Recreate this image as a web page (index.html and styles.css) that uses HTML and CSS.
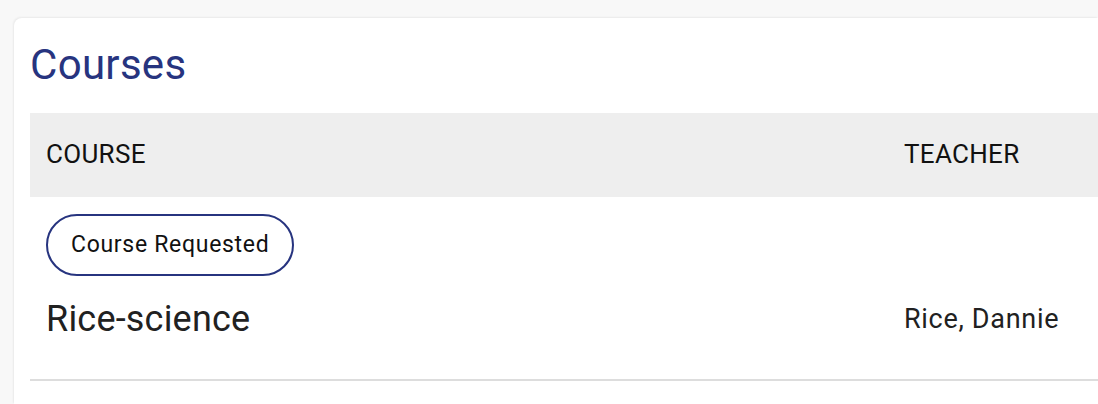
FILE: index.html
```html
<!DOCTYPE html>
<html lang="en">
<head>
    <meta charset="UTF-8">
    <meta name="viewport" content="width=device-width, initial-scale=1.0">
    <title>Courses</title>
    <link rel="stylesheet" href="styles.css">
</head>
<body>
    <div class="card">
        <h1 class="card-title">Courses</h1>
        <table class="courses">
            <thead>
                <tr>
                    <th class="col-course">Course</th>
                    <th class="col-teacher">Teacher</th>
                </tr>
            </thead>
            <tbody>
                <tr>
                    <td class="col-course">
                        <div class="chip-row">
                            <span class="chip">Course Requested</span>
                        </div>
                        <div class="course-name">Rice-science</div>
                    </td>
                    <td class="col-teacher teacher-name">Rice, Dannie</td>
                </tr>
            </tbody>
        </table>
    </div>
</body>
</html>
```

FILE: styles.css
```css
html, body {
    height: 100%;
}
body {
    font-family: Roboto, "Noto Sans", Arial, sans-serif;
    background-color: #f8f8f8;
    margin: 0;
    padding: 18px 0 0 14px;
    box-sizing: border-box;
    overflow: hidden;
}
.card {
    background-color: #ffffff;
    border-radius: 8px 0 0 0;
    box-shadow: -1px -1px 2px rgba(0, 0, 0, 0.06);
    padding: 23px 0 0 16px;
    height: 100%;
    box-sizing: border-box;
}
.card-title {
    margin: 0 0 24px 0;
    font-size: 42px;
    font-weight: 400;
    letter-spacing: 0.3px;
    line-height: 48px;
    color: #27347f;
}
.courses {
    width: 100%;
    border-collapse: collapse;
}
.courses th {
    background-color: #eeeeee;
    height: 84px;
    padding: 0 16px 3px 16px;
    box-sizing: border-box;
    text-align: left;
    font-weight: 400;
    font-size: 26px;
    letter-spacing: 0.3px;
    text-transform: uppercase;
    color: #111111;
}
.courses td {
    padding: 17px 16px 39px 16px;
    border-bottom: 2px solid #dddddd;
    vertical-align: bottom;
    color: #212121;
}
.col-course {
    width: 826px;
}
.chip-row {
    display: flex;
}
.chip {
    border: 2px solid #27347f;
    border-radius: 32px;
    padding: 16px 23px;
    font-size: 23px;
    letter-spacing: 0.7px;
    line-height: 26px;
    color: #111111;
}
.course-name {
    margin-top: 22px;
    font-size: 36px;
    letter-spacing: 0.2px;
    line-height: 42px;
}
.teacher-name {
    font-size: 27px;
    letter-spacing: 0.7px;
    line-height: 42px;
}
```
